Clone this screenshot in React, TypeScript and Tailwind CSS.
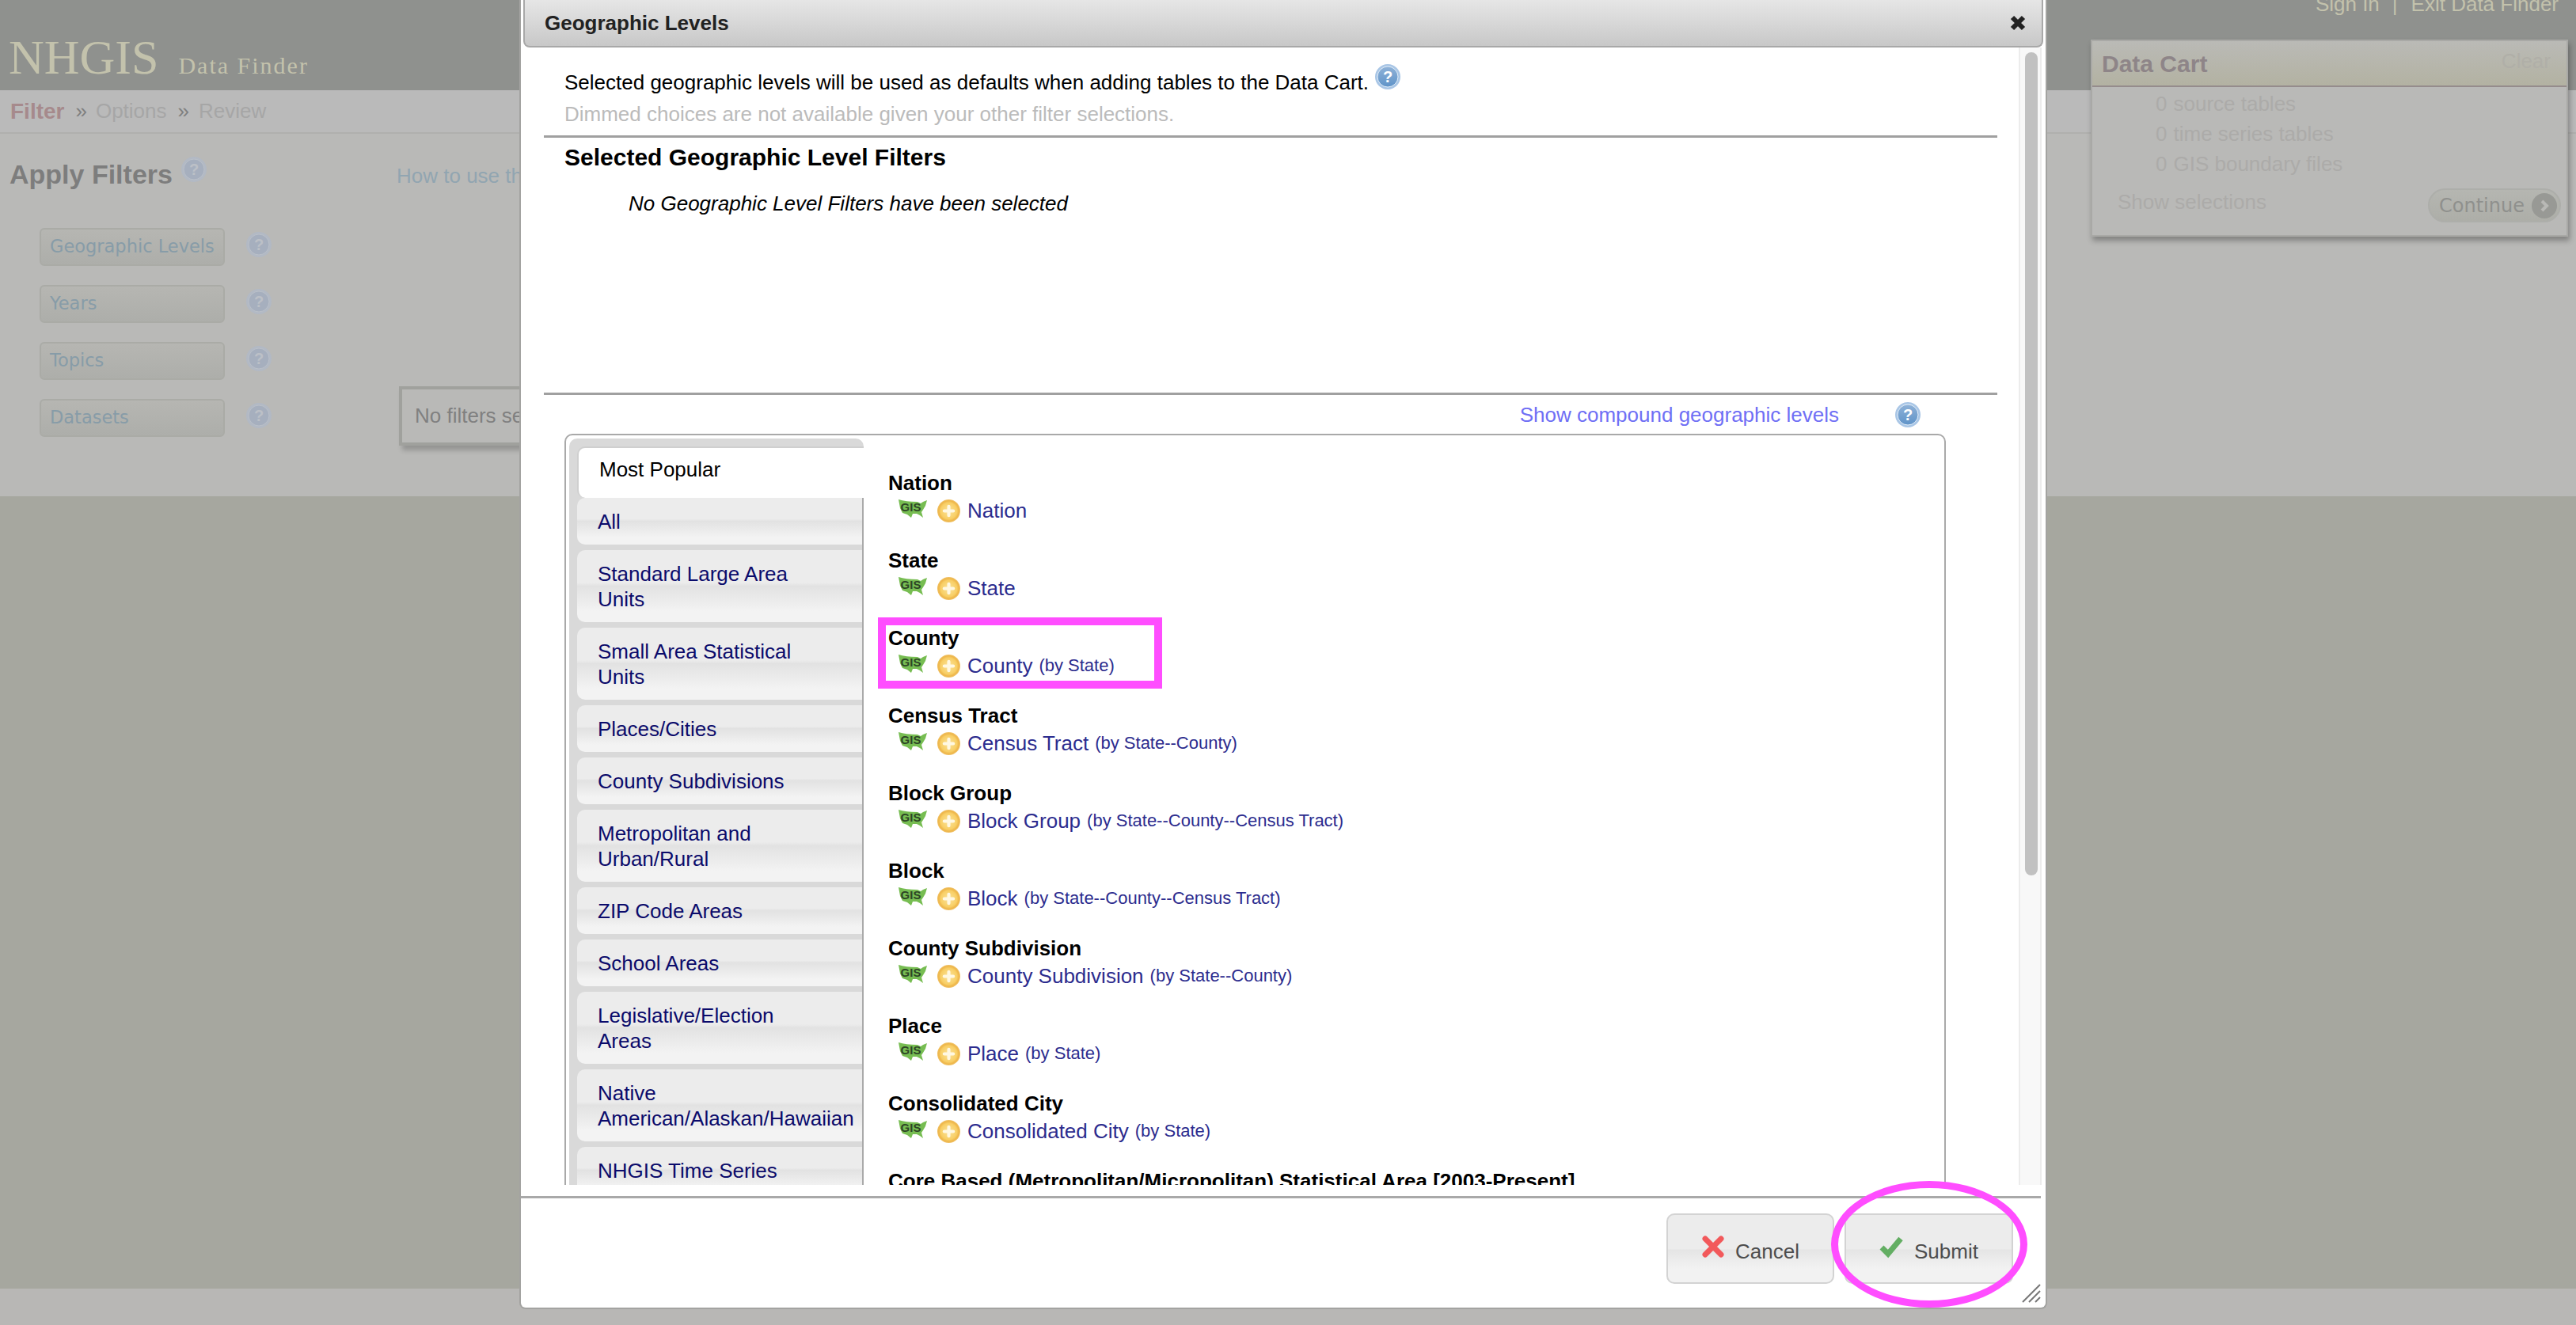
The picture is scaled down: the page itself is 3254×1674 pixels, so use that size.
import { Fragment } from 'react'

const tabs = [
  ['All'],
  ['Standard Large Area', 'Units'],
  ['Small Area Statistical', 'Units'],
  ['Places/Cities'],
  ['County Subdivisions'],
  ['Metropolitan and', 'Urban/Rural'],
  ['ZIP Code Areas'],
  ['School Areas'],
  ['Legislative/Election', 'Areas'],
  ['Native', 'American/Alaskan/Hawaiian'],
  ['NHGIS Time Series'],
]

const levels = [
  { title: 'Nation', name: 'Nation', by: '' },
  { title: 'State', name: 'State', by: '' },
  { title: 'County', name: 'County', by: '(by State)' },
  { title: 'Census Tract', name: 'Census Tract', by: '(by State--County)' },
  { title: 'Block Group', name: 'Block Group', by: '(by State--County--Census Tract)' },
  { title: 'Block', name: 'Block', by: '(by State--County--Census Tract)' },
  { title: 'County Subdivision', name: 'County Subdivision', by: '(by State--County)' },
  { title: 'Place', name: 'Place', by: '(by State)' },
  { title: 'Consolidated City', name: 'Consolidated City', by: '(by State)' },
]

function HelpIcon({ dim = false }: { dim?: boolean }) {
  return (
    <svg width="32" height="32" viewBox="0 0 32 32">
      <defs>
        <linearGradient id="helpFill" x1="0" y1="0" x2="0" y2="1">
          <stop offset="0" stopColor="#8fb2d8" />
          <stop offset="1" stopColor="#5f93c8" />
        </linearGradient>
      </defs>
      <circle cx="16" cy="16" r="16" fill={dim ? '#b2b9c4' : '#a9c6e6'} />
      <circle cx="16" cy="16" r="13" fill={dim ? '#a6afbe' : 'url(#helpFill)'} stroke={dim ? '#bac0c9' : '#e3eef8'} strokeWidth="1" />
      <text x="16" y="23" textAnchor="middle" fontSize="20" fontWeight="700" fontFamily="Liberation Sans" fill={dim ? '#bcc0c7' : '#fff'}>?</text>
    </svg>
  )
}

function GisIcon() {
  return (
    <svg width="36" height="24" viewBox="0 0 36 24" className="shrink-0">
      <path
        d="M0 0 C6 2 14 3 24 3 L28 5 L31 3 L36 1 L34 8 L31 13 L29 16 L31 23 L27 20 L23 18 L18 18 L16 23 L11 19 L5 17 L2 11 Z"
        fill="#77bd52"
      />
      <text x="15.5" y="15" textAnchor="middle" fontSize="15" fontWeight="700" fontFamily="Liberation Sans" fill="#2d4526">
        GIS
      </text>
    </svg>
  )
}

function AddIcon() {
  return (
    <svg width="29" height="29" viewBox="0 0 28 28" className="shrink-0">
      <defs>
        <radialGradient id="coinFill" cx="0.5" cy="0.5" r="0.5">
          <stop offset="0" stopColor="#fbe29a" />
          <stop offset="0.7" stopColor="#f8cf66" />
          <stop offset="0.88" stopColor="#eeb64a" />
          <stop offset="1" stopColor="#f0c36a" />
        </radialGradient>
      </defs>
      <circle cx="14" cy="14" r="14" fill="url(#coinFill)" />
      <path d="M14 8.5v11M8.5 14h11" stroke="#fff8e2" strokeWidth="4" strokeLinecap="round" />
    </svg>
  )
}

function FilterButton({ label }: { label: string }) {
  return (
    <div className="flex items-center gap-[27px]">
      <div className="w-[234px] h-[48px] flex items-center pl-[11px] rounded-[6px] border-2 border-[#aaaba6] bg-[linear-gradient(#b6b6b2,#adaeaa)] text-[#879ca8] text-[22.5px] [font-family:'DejaVu_Sans',sans-serif]">
        {label}
      </div>
      <div className="-mt-[6px] flex">
        <HelpIcon dim />
      </div>
    </div>
  )
}

function Background() {
  return (
    <div className="h-[1674px] flex flex-col bg-[#b8b7b5]">
      <header className="h-[114px] shrink-0 bg-[#8f918e] flex justify-between">
        <div className="flex items-baseline pl-[11px] pt-[39px] text-[#c3c2ac] [font-family:'Liberation_Serif',serif]">
          <span className="text-[62px] leading-[66px]">NHGIS</span>
          <span className="ml-[25px] text-[30px] tracking-[2px]">Data Finder</span>
        </div>
        <div className="flex pr-[22px] -mt-[11px] h-[32px] text-[26px] leading-[32px] text-[#c3c2ac]">
          <span>Sign In</span>
          <span className="ml-[16px]">|</span>
          <span className="ml-[17px]">Exit Data Finder</span>
        </div>
      </header>

      <nav className="h-[55px] shrink-0 flex items-center pl-[13px] border-b-2 border-[#b0b0ae] bg-[#bababa] text-[26px] text-[#a6a6a6]">
        <span className="text-[28px] font-bold text-[#a68a8c]">Filter</span>
        <span className="ml-[14px] text-[#7f7f7f]">»</span>
        <span className="ml-[11px]">Options</span>
        <span className="ml-[14px] text-[#7f7f7f]">»</span>
        <span className="ml-[12px]">Review</span>
      </nav>

      <main className="h-[458px] shrink-0 bg-[#b9b9b7] flex">
        <div className="w-[501px] shrink-0 pl-[12px] pt-[29px]">
          <div className="flex items-start gap-[11px] h-[90px]">
            <h2 className="text-[34px] leading-[44px] font-bold text-[#7d7d7d]">Apply Filters</h2>
            <HelpIcon dim />
          </div>
          <div className="flex flex-col gap-[24px] pl-[38px]">
            <FilterButton label="Geographic Levels" />
            <FilterButton label="Years" />
            <FilterButton label="Topics" />
            <FilterButton label="Datasets" />
          </div>
        </div>
        <div className="flex-1 min-w-0">
          <div className="pt-[37px] text-[26px] leading-[32px] text-[#91a5b1]">How to use this</div>
          <div className="mt-[250px] ml-[3px] w-[500px] h-[75px] flex items-center pl-[16px] border-4 border-[#a0a19d] shadow-[4px_6px_6px_rgba(0,0,0,0.2)] text-[26px] text-[#808080]">
            No filters selected
          </div>
        </div>
      </main>

      <div className="h-[1001px] shrink-0 bg-[#a6a79f]" />
    </div>
  )
}

function DataCart() {
  return (
    <aside className="absolute left-[2641px] top-[50px] w-[603px] h-[249px] border-2 border-[#a9a9a6] bg-[#b9b9b7] shadow-[2px_5px_7px_rgba(0,0,0,0.3)]">
      <div className="h-[58px] flex items-center justify-between pl-[12px] pr-[20px] border-b-2 border-[#958c8c] bg-[linear-gradient(#babab6,#b3b2a2)]">
        <span className="text-[30px] font-bold text-[#8e8588]">Data Cart</span>
        <span className="text-[26px] text-[#b0afa8] -mt-[6px]">Clear</span>
      </div>
      <div className="pl-[80px] pt-[2px] text-[26px] leading-[38px] text-[#acaba9]">
        <div className="flex gap-[8px]"><span>0</span><span>source tables</span></div>
        <div className="flex gap-[8px]"><span>0</span><span>time series tables</span></div>
        <div className="flex gap-[8px]"><span>0</span><span>GIS boundary files</span></div>
      </div>
      <div className="flex justify-between items-start pl-[32px] pr-[7px] pt-[13px] text-[26px] text-[#acaba9]">
        <span className="leading-[32px]">Show selections</span>
        <span className="-mt-[1px] w-[168px] h-[43px] flex items-center justify-between pl-[12px] pr-[3px] rounded-full border-2 border-[#adaeaa] bg-[linear-gradient(#b5b6b1,#adaea8)] text-[#8f908d] text-[24px] [font-family:'DejaVu_Sans',sans-serif]">
          Continue
          <span className="w-[32px] h-[32px] rounded-full bg-[#989995] flex items-center justify-center">
            <svg width="16" height="18" viewBox="0 0 16 18"><path d="M5 3l6 6-6 6" fill="none" stroke="#b9b9b6" strokeWidth="4" /></svg>
          </span>
        </span>
      </div>
    </aside>
  )
}

function TabList() {
  return (
    <div className="w-[372px] shrink-0 rounded-t-[10px] bg-[#d9d9d9] pt-[10px]">
      <div className="ml-[10px] h-[65px] flex items-start pl-[26px] pt-[11px] rounded-tl-[10px] rounded-bl-[10px] bg-white border-l-2 border-t-2 border-[#cfcfcf] text-[26px] leading-[32px] text-black">
        Most Popular
      </div>
      <div className="border-r-2 border-[#aaaaaa] pl-[10px] flex flex-col gap-[7px]">
        {tabs.map((lines) => (
          <div
            key={lines[0]}
            className="rounded-l-[10px] pt-[14px] pb-[13px] pl-[26px] bg-[linear-gradient(#ececec_0%,#ececec_45%,#e2e2e2_50%,#f3f3f3_85%)] text-[26px] leading-[32px] text-[#0b0b6b] whitespace-nowrap"
          >
            {lines.map((line) => (
              <Fragment key={line}>
                {line}
                <br />
              </Fragment>
            ))}
          </div>
        ))}
      </div>
    </div>
  )
}

function LevelList() {
  return (
    <div className="flex-1 pl-[31px] pt-[40px]">
      {levels.map((level) => (
        <div key={level.title} className="h-[98px]">
          <div className="text-[26px] leading-[32px] font-bold text-black">{level.title}</div>
          <div className="flex items-center h-[34px] mt-[2px] pl-[13px] text-[#2c2c8e]">
            <span className="-mt-[4px] flex"><GisIcon /></span>
            <span className="ml-[13px] flex"><AddIcon /></span>
            <span className="ml-[9px] text-[26px] leading-[32px]">{level.name}</span>
            {level.by && <span className="ml-[8px] text-[22px] leading-[32px]">{level.by}</span>}
          </div>
        </div>
      ))}
      <div className="text-[26px] leading-[32px] font-bold text-black whitespace-nowrap">
        Core Based (Metropolitan/Micropolitan) Statistical Area [2003-Present]
      </div>
    </div>
  )
}

function Modal() {
  return (
    <section className="absolute left-[656px] top-0 w-[1930px] h-[1654px] flex flex-col bg-white border-x-2 border-b-2 border-[#a3a3a1] rounded-b-[8px]">
      <div className="h-[60px] shrink-0 mx-[3px] pl-[25px] pr-[20px] flex items-center justify-between rounded-b-[8px] border-x-2 border-b-2 border-[#a8a8a8] bg-[linear-gradient(#e6e6e6,#c8c8c8)]">
        <span className="text-[26px] font-bold text-[#222]">Geographic Levels</span>
        <svg width="20" height="20" viewBox="0 0 20 20"><path d="M3 3l14 14M17 3L3 17" stroke="#222" strokeWidth="6" /></svg>
      </div>

      <div className="flex h-[1437px] shrink-0">
        <div className="w-[1892px] shrink-0 overflow-hidden pl-[29px]">
          <div className="w-[1836px] h-[114px] pl-[26px] pt-[28px] border-b-[3px] border-[#a0a0a0] text-[26px] leading-[32px]">
            <div className="flex items-start text-black">
              Selected geographic levels will be used as defaults when adding tables to the Data Cart.
              <span className="ml-[8px] -mt-[7px] flex"><HelpIcon /></span>
            </div>
            <div className="mt-[8px] text-[#bbbbbb]">Dimmed choices are not available given your other filter selections.</div>
          </div>
          <div className="w-[1836px] h-[325px] border-b-[3px] border-[#a0a0a0] pl-[26px] pt-[5px]">
            <h3 className="text-[30px] leading-[40px] font-bold text-black">Selected Geographic Level Filters</h3>
            <p className="mt-[22px] ml-[81px] text-[26px] leading-[32px] italic text-black">No Geographic Level Filters have been selected</p>
          </div>
          <div className="w-[1739px] h-[49px] flex items-center justify-end gap-[71px]">
            <span className="text-[26px] leading-[32px] text-[#6f6ff5]">Show compound geographic levels</span>
            <span className="flex"><HelpIcon /></span>
          </div>
          <div className="ml-[26px] w-[1745px] h-[960px] flex items-start pt-[4px] pl-[4px] border-2 border-[#a9a9a9] rounded-t-[10px]">
            <TabList />
            <LevelList />
          </div>
        </div>
        <div className="w-[29px] shrink-0 border-x-2 border-[#ececec] bg-[#f8f8f8] px-[6px] pt-[6px]">
          <div className="w-[16px] h-[1040px] rounded-full bg-[#c1c1c1]" />
        </div>
      </div>

      <div className="flex-1 relative mt-[14px] mr-[6px] border-t-[3px] border-[#a9a9a9] flex justify-end items-start gap-[13px] pt-[19px] pr-[35px]">
        <button className="w-[212px] h-[89px] flex items-center pl-[42px] rounded-[10px] border-2 border-[#d3d3d3] bg-[linear-gradient(#ececec_0%,#ececec_50%,#e5e5e5_52%,#f2f2f2_80%)] text-[26px] text-[#4d4d4d]">
          <svg width="30" height="30" viewBox="0 0 30 30" className="-mt-[5px] mr-[13px]"><path d="M5 5l20 20M25 5L5 25" stroke="#f2595b" strokeWidth="7" strokeLinecap="round" /></svg>
          <span className="mt-[8px]">Cancel</span>
        </button>
        <button className="w-[213px] h-[89px] flex items-center pl-[41px] rounded-[10px] border-2 border-[#d3d3d3] bg-[linear-gradient(#ececec_0%,#ececec_50%,#e5e5e5_52%,#f2f2f2_80%)] text-[26px] text-[#4d4d4d]">
          <svg width="32" height="30" viewBox="0 0 32 30" className="-mt-[5px] mr-[13px]"><path d="M4 16l8 8L28 5" fill="none" stroke="#63ae63" strokeWidth="7" /></svg>
          <span className="mt-[8px]">Submit</span>
        </button>
        <svg width="24" height="24" viewBox="0 0 24 24" className="absolute right-[0px] bottom-[6px]">
          <path d="M1 23L23 1M9 23L23 9M17 23l6-6" stroke="#777" strokeWidth="2" />
        </svg>
      </div>
    </section>
  )
}

export default function App() {
  return (
    <div className="relative w-[3254px] h-[1674px] overflow-hidden [font-family:'Liberation_Sans',Arial,sans-serif]">
      <Background />
      <DataCart />
      <Modal />
      {/* annotations drawn on top of the screenshot */}
      <div className="absolute left-[1109px] top-[780px] w-[359px] h-[90px] border-[10px] border-[#ff4dff]" />
      <div className="absolute left-[2313px] top-[1492px] w-[248px] h-[160px] rounded-[50%] border-[9px] border-[#ff4dff]" />
    </div>
  )
}
